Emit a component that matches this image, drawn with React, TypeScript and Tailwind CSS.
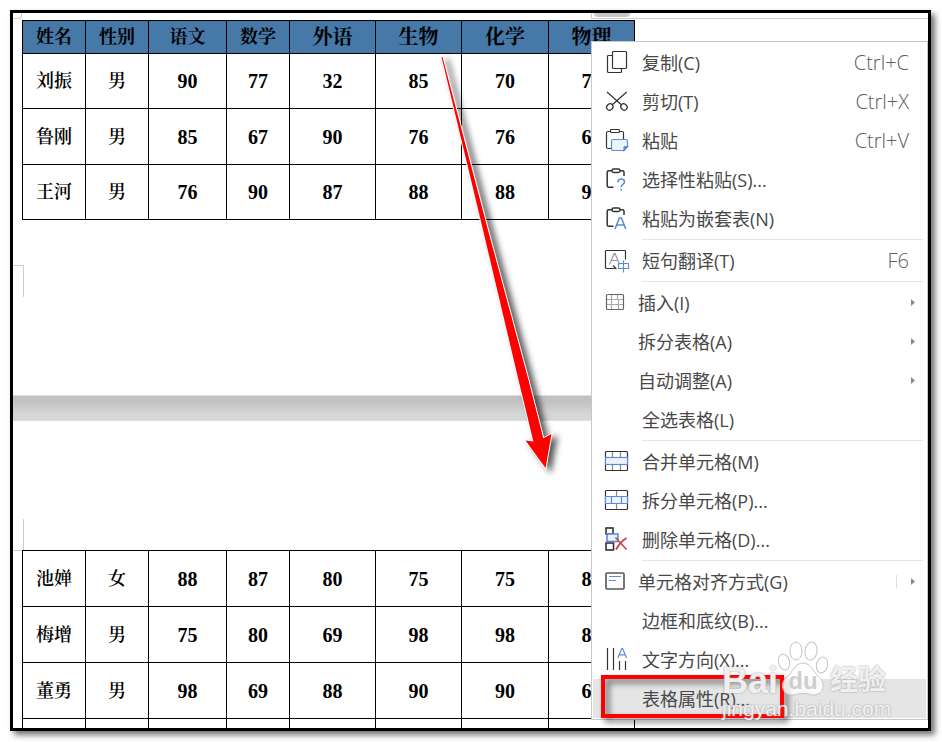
import React from "react";
import clsx from "clsx";

const INK = "#333333";
const BLUE = "#5b8bdb";
const PALE = "#edf3fc";

const columns = ["姓名", "性别", "语文", "数学", "外语", "生物", "化学", "物理"];

const firstPage = [
  ["刘振", "男", "90", "77", "32", "85", "70", "76"],
  ["鲁刚", "男", "85", "67", "90", "76", "76", "67"],
  ["王河", "男", "76", "90", "87", "88", "88", "90"],
];

const secondPage = [
  ["池婵", "女", "88", "87", "80", "75", "75", "80"],
  ["梅增", "男", "75", "80", "69", "98", "98", "88"],
  ["董勇", "男", "98", "69", "88", "90", "90", "69"],
  ["", "", "", "", "", "", "", ""],
];

type Item = {
  label: string;
  icon?: React.ReactNode;
  shortcut?: string;
  submenu?: boolean;
  split?: boolean;
  active?: boolean;
};

function Icon({ children }: { children?: React.ReactNode }) {
  return (
    <svg
      aria-hidden="true"
      className="size-[25px] shrink-0 overflow-visible"
      viewBox="0 0 25 25"
      fill="none"
      stroke={INK}
      strokeWidth="1.2"
    >
      {children}
    </svg>
  );
}

function Clipboard() {
  return (
    <g strokeWidth="1.5">
      <path d="M7 3.7H3.7Q2.2 3.7 2.2 5.2V18.8Q2.2 20.3 3.7 20.3H8.5M15 3.7H17.5Q19 3.7 19 5.2V9" />
      <rect x="7" y="2" width="8" height="3.4" rx="1.6" />
    </g>
  );
}

const CopyIcon = (
  <Icon>
    <rect x="7.5" y="1.5" width="14" height="17" rx="1" />
    <path d="M7 5.5H3.5Q2.5 5.5 2.5 6.5V21.5Q2.5 22.5 3.5 22.5H15.5Q16.5 22.5 16.5 21.5V19" />
  </Icon>
);

const CutIcon = (
  <Icon>
    <path d="M2 3L16.7 16M21.7 3L7 16" />
    <ellipse cx="4.8" cy="18" rx="3.4" ry="2.9" transform="rotate(-40 4.8 18)" />
    <ellipse cx="19" cy="18" rx="3.4" ry="2.9" transform="rotate(40 19 18)" />
  </Icon>
);

const PasteIcon = (
  <Icon>
    <path d="M5.5 3.5H3Q1.5 3.5 1.5 5V19Q1.5 20.5 3 20.5H6M14.5 3.5H17Q18.5 3.5 18.5 5V11" />
    <rect x="5.5" y="1.5" width="9" height="3" rx="1" />
    <path
      d="M8 11.5H21Q22.5 11.5 22.5 13V18.5L19 22.5H8Q6.5 22.5 6.5 21V13Q6.5 11.5 8 11.5Z"
      fill={PALE}
      stroke={BLUE}
    />
    <path d="M22.5 18.5H20Q19 18.5 19 19.5V22.5Z" fill={BLUE} stroke={BLUE} />
  </Icon>
);

const PasteSpecialIcon = (
  <Icon>
    <Clipboard />
    <path d="M13 15.5Q13 12 16.2 12Q19.5 12 19.5 14.8Q19.5 16.6 17.8 17.4Q16.2 18.2 16.2 20.2M16.2 21.8V23.6" stroke={BLUE} strokeWidth="1.6" />
  </Icon>
);

const PasteNestedIcon = (
  <Icon>
    <Clipboard />
    <path d="M10 23L14.4 12H16.4L20.8 23M11.8 19H19" stroke={BLUE} strokeWidth="1.6" />
  </Icon>
);

const TranslateIcon = (
  <Icon>
    <path d="M20.5 11.5V3.5Q20.5 2.5 19.5 2.5H1.5Q.5 2.5 .5 3.5V19.5Q.5 20.5 1.5 20.5H11.5M8 17.5L11 20.5" />
    <path d="M4.5 16.5L9.2 5.5H10L14.7 16.5M6.5 12.5H12.8" stroke="#999999" />
    <path d="M13.5 15.5H23.5V20.5H13.5ZM18.5 12.5V24.5" stroke={BLUE} />
  </Icon>
);

const InsertIcon = (
  <Icon>
    <path d="M6.5 4.5V19.5M13.5 9V19.5M1.5 9.5H18.5M1.5 14.5H18.5M12.5 4.5V9" stroke="#aaaaaa" />
    <rect x="1.5" y="4.5" width="17" height="15" rx="1" stroke="#666666" />
  </Icon>
);

const MergeIcon = (
  <Icon>
    <path d="M7.5 2.5V8.5M15.5 2.5V8.5M7.5 15.5V21.5M15.5 15.5V21.5" stroke="#888888" />
    <rect x=".5" y="2.5" width="22" height="19" rx="1" />
    <rect x=".5" y="8.5" width="22" height="7" fill={PALE} stroke={BLUE} />
  </Icon>
);

const SplitIcon = (
  <Icon>
    <path d="M11.5 2.5V8.5M11.5 15.5V21.5" stroke="#888888" />
    <rect x=".5" y="2.5" width="22" height="19" rx="1" />
    <path d="M.5 8.5H22.5V15.5H.5ZM6.5 8.5V15.5M16.5 8.5V15.5" fill={PALE} stroke={BLUE} />
  </Icon>
);

const DeleteIcon = (
  <Icon>
    <rect x="1" y="1" width="7" height="6" strokeWidth="1.6" />
    <rect x="1" y="16" width="7.5" height="7" strokeWidth="1.6" />
    <rect x="2" y="7" width="11" height="7.5" fill={PALE} stroke={BLUE} strokeWidth="1.6" />
    <path d="M10.5 10.5L21.5 22.5" stroke="#d14545" strokeWidth="1.6" />
    <path d="M21.5 11Q15 15 11 22.5" stroke="#d14545" strokeWidth="2" />
  </Icon>
);

const AlignIcon = (
  <Icon>
    <rect x="1" y="4" width="18" height="16" rx="1" stroke="#555555" strokeWidth="1.6" />
    <path d="M4 7.5H16M4 11.5H11" stroke={BLUE} />
  </Icon>
);

const DirectionIcon = (
  <Icon>
    <path d="M2.5 1V23M8.5 1V23M14.5 14V23M20.5 14V23" />
    <path d="M12.8 11L16.8 1.5H17.6L21.6 11M14.2 7.8H20.2" stroke={BLUE} />
  </Icon>
);

const groups: Item[][] = [
  [
    { label: "复制(C)", icon: CopyIcon, shortcut: "Ctrl+C" },
    { label: "剪切(T)", icon: CutIcon, shortcut: "Ctrl+X" },
    { label: "粘贴", icon: PasteIcon, shortcut: "Ctrl+V" },
    { label: "选择性粘贴(S)...", icon: PasteSpecialIcon },
    { label: "粘贴为嵌套表(N)", icon: PasteNestedIcon },
  ],
  [{ label: "短句翻译(T)", icon: TranslateIcon, shortcut: "F6" }],
  [
    { label: "插入(I)", icon: InsertIcon, submenu: true },
    { label: "拆分表格(A)", submenu: true },
    { label: "自动调整(A)", submenu: true },
    { label: "全选表格(L)" },
  ],
  [
    { label: "合并单元格(M)", icon: MergeIcon },
    { label: "拆分单元格(P)...", icon: SplitIcon },
    { label: "删除单元格(D)...", icon: DeleteIcon },
  ],
  [
    { label: "单元格对齐方式(G)", icon: AlignIcon, submenu: true, split: true },
    { label: "边框和底纹(B)..." },
    { label: "文字方向(X)...", icon: DirectionIcon },
    { label: "表格属性(R)...", active: true },
  ],
];

function MenuItem({ item }: { item: Item }) {
  return (
    <button
      type="button"
      role="menuitem"
      className={clsx(
        "relative flex h-[39px] w-full items-center pl-3 text-left text-lg",
        item.submenu ? "gap-2 pr-[11px]" : "gap-3 pr-[17px]",
        item.active ? "bg-[#e5e5e5]" : "hover:bg-[#e5e5e5]"
      )}
    >
      {item.icon ?? <span className="w-[25px] shrink-0" />}
      <span className="flex-1 whitespace-nowrap text-[#484848]">{item.label}</span>
      {item.shortcut && <span className="text-xl font-light text-[#5c5c5c]">{item.shortcut}</span>}
      {item.split && <span className="mr-1.5 h-[13px] w-px bg-[#dddddd]" />}
      {item.submenu && (
        <svg aria-hidden="true" className="h-[7px] w-1" viewBox="0 0 4 7">
          <path d="M0 0L4 3.5L0 7Z" fill="#8a8a8a" />
        </svg>
      )}
      {item.active && (
        <span className="absolute -top-1 left-2 h-[43px] w-[183px] border-4 border-[#ff0000] drop-shadow-[4px_4px_3px_rgba(0,0,0,0.6)]" />
      )}
    </button>
  );
}

function ContextMenu() {
  return (
    <div
      role="menu"
      className="absolute top-7 left-[578px] w-[337px] border border-[#c8c8c8] bg-white p-px font-['Open_Sans','Noto_Sans_CJK_SC',sans-serif]"
    >
      {groups.map((group, i) => (
        <React.Fragment key={i}>
          {i > 0 && (
            <div role="separator" className="mr-[3px] ml-[49px] py-px">
              <div className="h-px bg-[#e4e4e4]" />
            </div>
          )}
          {group.map((item) => (
            <MenuItem key={item.label} item={item} />
          ))}
        </React.Fragment>
      ))}
    </div>
  );
}

function ScoreTable({ rows, header, rowClass }: { rows: string[][]; header?: boolean; rowClass: string }) {
  return (
    <table className="ml-[9px] w-[613px] table-fixed border-collapse text-center text-lg leading-6 font-semibold text-black">
      <colgroup>
        <col className="w-[63px]" />
        <col className="w-[63px]" />
        <col className="w-[78px]" />
        <col className="w-[63px]" />
        <col className="w-[86px]" />
        <col className="w-[86px]" />
        <col className="w-[87px]" />
        <col className="w-[86px]" />
      </colgroup>
      {header && (
        <thead>
          <tr className="h-[33px] bg-[#4678a8]">
            {columns.map((name, i) => (
              <th key={name} scope="col" className={clsx("border border-black p-0", i > 3 && "text-xl leading-6")}>
                {name}
              </th>
            ))}
          </tr>
        </thead>
      )}
      <tbody>
        {rows.map((row, r) => (
          <tr key={r} className={rowClass}>
            {row.map((cell, c) => (
              <td key={c} className={clsx("border border-black p-0", c > 1 && "text-xl leading-6")}>
                {cell}
              </td>
            ))}
          </tr>
        ))}
      </tbody>
    </table>
  );
}

function Arrow() {
  return (
    <svg
      aria-hidden="true"
      className="pointer-events-none absolute top-11 left-[427px] h-[416px] w-[116px] overflow-visible drop-shadow-[5px_3px_3px_rgba(0,0,0,0.65)]"
      viewBox="440 57 116 416"
    >
      <path
        d="M441.5 57L483 230L518.5 380L533.4 441.5L525.5 440.5L545.5 468L551.5 434L543.3 438.3L528.5 380L488 230L442.5 57Z"
        fill="#ff0000"
        stroke="#ffffff"
        strokeWidth="2"
        paintOrder="stroke"
      />
    </svg>
  );
}

function Watermark() {
  return (
    <div className="pointer-events-none absolute top-[628px] left-[709px] font-['Liberation_Sans','Noto_Sans_CJK_SC',sans-serif] text-white/85 [text-shadow:0_0_2px_#8c8c8c]">
      <div className="flex h-14 items-end">
        <span className="text-4xl leading-8 font-bold">Bai</span>
        <span className="relative mr-0.5 flex h-14 w-[50px] items-end justify-center">
          <svg aria-hidden="true" className="absolute inset-0 h-14 w-[50px]" viewBox="0 0 50 56" fill="#ffffff" fillOpacity="0.75" stroke="#c4c4c4">
            <ellipse cx="6" cy="21" rx="5.5" ry="8" transform="rotate(-14 6 21)" />
            <ellipse cx="18" cy="10" rx="6" ry="9" />
            <ellipse cx="33" cy="10" rx="6" ry="9" transform="rotate(8 33 10)" />
            <ellipse cx="44" cy="24" rx="5.5" ry="8" transform="rotate(14 44 24)" />
            <path d="M25 22C33 22 35 31 41 36C49 43 45 55 34 54C28 52 22 52 16 54C5 55 1 44 8 37C15 31 17 22 25 22Z" />
          </svg>
          <span className="relative text-2xl leading-8 font-bold text-[#cfcfcf] [text-shadow:none]">du</span>
        </span>
        <span className="text-[28px] leading-8 font-bold">经验</span>
      </div>
      <div className="text-[21px] leading-6">jingyan.baidu.com</div>
    </div>
  );
}

export default function App() {
  return (
    <main className="flex h-screen bg-white pt-2.5 pr-[11px] pb-[11px] pl-2.5">
      <div className="relative flex-1 overflow-hidden border-[3px] border-black bg-white font-['Liberation_Serif','Noto_Serif_CJK_SC','Noto_Sans_CJK_SC',serif] shadow-[4px_4px_6px_rgba(0,0,0,0.55)]">
        <section>
          <div className="flex h-[7px] justify-between">
            <div className="h-1.5 w-[9px] rounded-br border-r border-b border-[#cccccc]" />
            <div className="ml-[569px] h-1.5 flex-1 border-b border-l border-[#cccccc]">
              <div className="ml-0.5 h-1 w-9 rounded-b-lg bg-[#c8c8c8]" />
            </div>
          </div>
          <ScoreTable rows={firstPage} header rowClass="h-[55px] even:h-14" />
          <div className="mt-[45px] h-8 w-[11px] border-t border-r border-[#cccccc]" />
        </section>
        <div className="mt-[98px] h-[26px] border-y border-[#dedede] bg-linear-to-b from-[#c2c2c2] from-25% to-[#d6d6d6] to-75%" />
        <section className="pt-[98px]">
          <div className="h-8 w-[11px] border-r border-b border-[#cccccc]" />
          <div className="-mt-px">
            <ScoreTable rows={secondPage} rowClass="h-14" />
          </div>
        </section>
        <Arrow />
        <ContextMenu />
        <Watermark />
      </div>
    </main>
  );
}
